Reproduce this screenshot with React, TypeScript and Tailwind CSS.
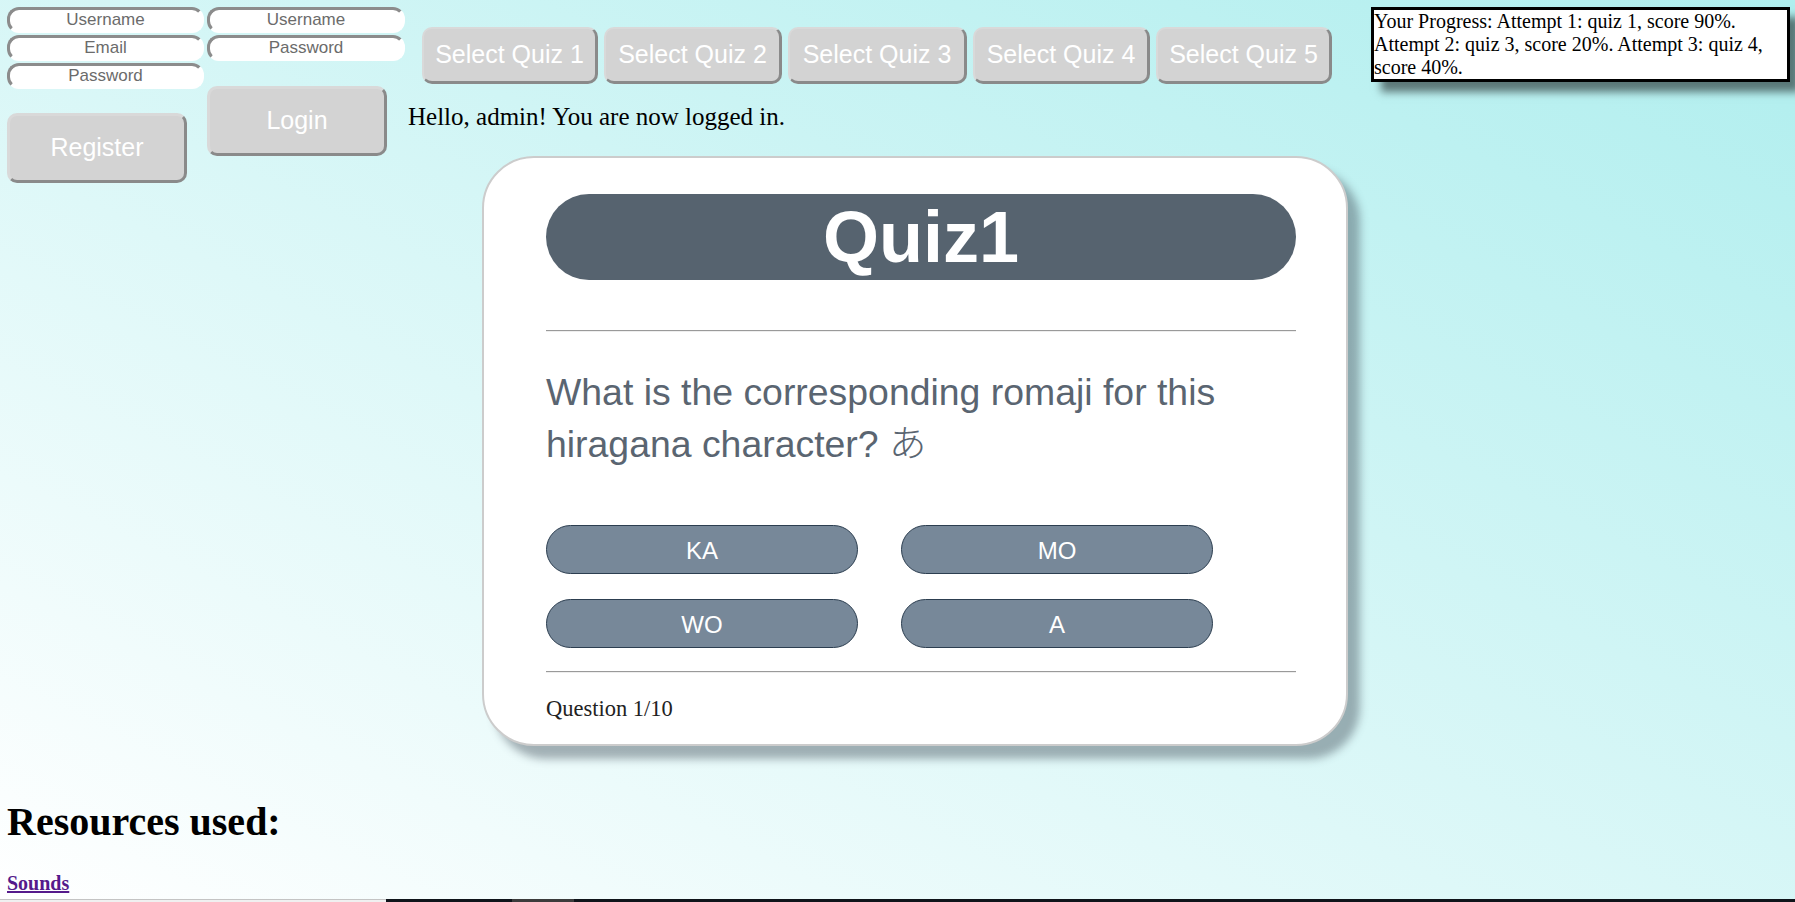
import React from 'react';

const serif = "font-['Liberation_Serif','Times_New_Roman',serif]";
const sans = "font-['Liberation_Sans',Arial,sans-serif]";

const inputCls =
  "block h-[26px] w-full rounded-[12px] border-[3px] border-t-[#8c8c8c] border-l-[#8c8c8c] border-r-white border-b-white bg-white text-center text-[17px] leading-none text-[#555] placeholder:text-[#6b6b6b] outline-none font-['Liberation_Sans',Arial,sans-serif]";

const greyBtn =
  "rounded-[10px] border-[3px] border-t-[#d9d9d9] border-l-[#d9d9d9] border-r-[#8a8a8a] border-b-[#8a8a8a] bg-[#d3d3d3] text-white font-['Liberation_Sans',Arial,sans-serif]";

const quizzes = [
  { label: 'Select Quiz 1', w: 'w-[176px]' },
  { label: 'Select Quiz 2', w: 'w-[178px]' },
  { label: 'Select Quiz 3', w: 'w-[179px]' },
  { label: 'Select Quiz 4', w: 'w-[177px]' },
  { label: 'Select Quiz 5', w: 'w-[176px]' },
];
const answers = ['KA', 'MO', 'WO', 'A'];

const RegisterForm: React.FC = () => (
  <div className="ml-[7px] mt-[7px] flex w-[197px] shrink-0 flex-col">
    <input className={inputCls} placeholder="Username" />
    <input className={`${inputCls} mt-[2px]`} placeholder="Email" />
    <input className={`${inputCls} mt-[2px]`} type="password" placeholder="Password" />
    <button className={`${greyBtn} mt-[24px] h-[70px] w-[180px] text-[25px]`}>Register</button>
  </div>
);

const LoginForm: React.FC = () => (
  <div className="ml-[3px] mt-[7px] flex w-[198px] shrink-0 flex-col">
    <input className={inputCls} placeholder="Username" />
    <input className={`${inputCls} mt-[2px]`} type="password" placeholder="Password" />
    <button className={`${greyBtn} mt-[25px] h-[70px] w-[180px] text-[25px]`}>Login</button>
  </div>
);

const QuizCard: React.FC = () => (
  <div className="ml-[74px] mt-[25px] w-[866px] rounded-[52px] border-2 border-[#cccccc] bg-white pb-[22px] pl-[62px] pr-[50px] pt-[36px] shadow-[12px_13px_8px_rgba(70,85,95,0.45)]">
    <div className="flex h-[86px] items-center justify-center rounded-full bg-[#56636f]">
      <h1 className={`${sans} text-[72px] font-bold leading-none text-white`}>Quiz1</h1>
    </div>
    <div className="mt-[50px] border-t border-b border-t-[#9a9a9a] border-b-[#eeeeee]" />
    <p className={`${sans} mt-[34px] text-[37.4px] leading-[52px] text-[#5a6571]`}>
      What is the corresponding romaji for this hiragana character?{' '}
      <span className="font-['Noto_Sans_CJK_JP',sans-serif] font-light leading-none">あ</span>
    </p>
    <div className="mt-[55px] grid w-[667px] grid-cols-2 gap-x-[43px] gap-y-[25px]">
      {answers.map(a => (
        <button
          key={a}
          className={`${sans} h-[49px] rounded-full border border-[#2c3e50] bg-[#778899] pt-[3px] text-[24px] text-white`}
        >
          {a}
        </button>
      ))}
    </div>
    <div className="mt-[23px] border-t border-b border-t-[#9a9a9a] border-b-[#eeeeee]" />
    <p className={`${serif} mt-[23px] text-[22.5px] leading-[26px] text-[#222]`}>Question 1/10</p>
  </div>
);

const App: React.FC = () => {
  return (
    <div className={`${serif} flex h-[902px] w-full flex-col overflow-hidden bg-[linear-gradient(to_top_right,#ffffff,#afeeee)] text-black`}>
      <div className="flex items-start">
        <RegisterForm />
        <LoginForm />
        <div className="ml-[3px] flex shrink-0 flex-col">
          <div className="ml-[14px] mt-[27px] flex gap-[6px]">
            {quizzes.map(q => (
              <button key={q.label} className={`${greyBtn} ${q.w} h-[57px] border-t-2 border-l-2 text-[25px] whitespace-nowrap`}>
                {q.label}
              </button>
            ))}
          </div>
          <p className="mt-[18px] text-[25px] leading-[29px]">Hello, admin! You are now logged in.</p>
          <QuizCard />
        </div>
        <div className="ml-auto mr-[5px] mt-[7px] w-[419px] shrink-0 border-[3px] border-black bg-white text-[20px] leading-[23px] shadow-[10px_10px_8px_rgba(0,0,0,0.5)]">
          Your Progress: Attempt 1: quiz 1, score 90%. Attempt 2: quiz 3, score 20%. Attempt 3: quiz 4, score 40%.
        </div>
      </div>

      <h2 className="mt-[53px] pl-[7px] text-[40px] font-bold leading-[46px]">Resources used:</h2>
      <a href="#" className="ml-[7px] mt-[27px] w-fit text-[20px] font-bold leading-[23px] text-[#551a8b] underline">
        Sounds
      </a>

      <div className="mt-[4px] flex h-[10px] shrink-0">
        <div className="w-[386px] border-t border-[#c4c4c4] bg-[#f0f0f0]" />
        <div className="flex-1 bg-[#0f141a]">
          <div className="ml-[126px] h-full w-[62px] bg-[#3c3c3c]" />
        </div>
      </div>
    </div>
  );
};

export default App;
